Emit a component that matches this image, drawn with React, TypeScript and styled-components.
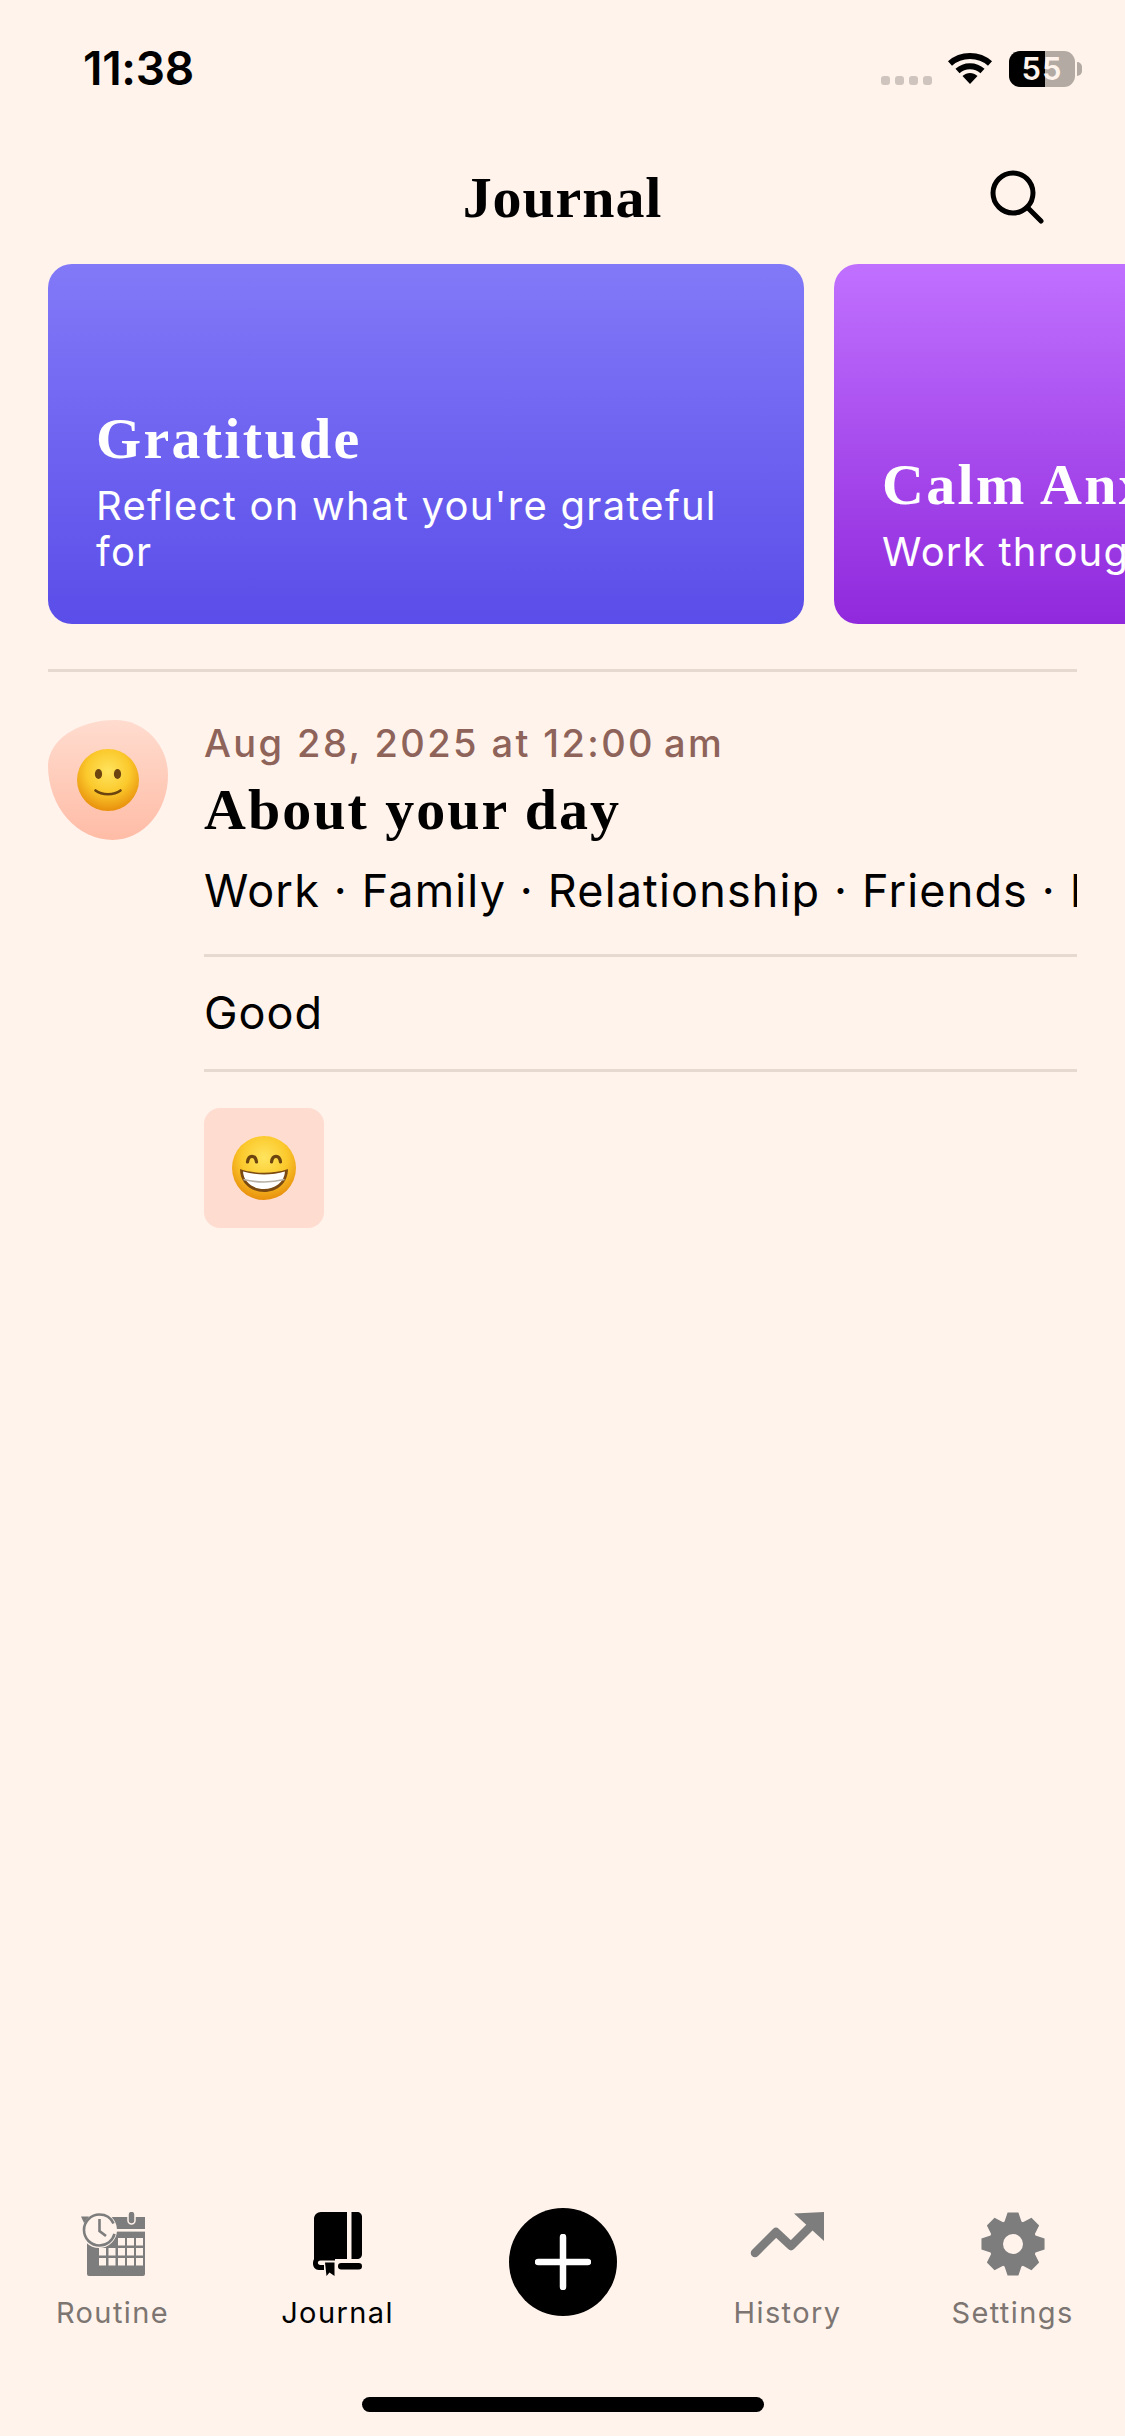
import styled, { createGlobalStyle } from "styled-components";

const GlobalStyle = createGlobalStyle`
  html, body {
    margin: 0;
    padding: 0;
    background: #fff3ec;
  }
  * {
    box-sizing: border-box;
  }
`;

const SANS = `Inter, "Liberation Sans", sans-serif`;
const SERIF = `"Liberation Serif", serif`;

const Page = styled.div`
  width: 1125px;
  height: 2436px;
  display: flex;
  flex-direction: column;
  overflow: hidden;
  background: #fff3ec;
  color: #000;
  font-family: ${SANS};
`;

const StatusBar = styled.div`
  height: 130px;
  padding: 44px 43px 0 83px;
  display: flex;
  justify-content: space-between;
  align-items: flex-start;
`;

const Time = styled.div`
  font-size: 46px;
  line-height: 48px;
  font-weight: 600;
  letter-spacing: -0.3px;
`;

const StatusIcons = styled.div`
  display: flex;
  align-items: flex-start;
  margin-top: 7px;
`;

const SignalDots = styled.div`
  display: flex;
  gap: 5px;
  margin: 25px 15px 0 0;
`;

const Dot = styled.span`
  width: 9px;
  height: 9px;
  border-radius: 3px;
  background: #cfc5be;
`;

const Battery = styled.div`
  width: 66px;
  height: 36px;
  margin-left: 16px;
  border-radius: 11px;
  background: linear-gradient(90deg, #000 0 36px, #b3aaa4 36px 100%);
  color: #fff3ec;
  font-size: 31px;
  font-weight: 600;
  line-height: 36px;
  letter-spacing: 1px;
  text-align: center;
`;

const BatteryNub = styled.div`
  width: 5px;
  height: 14px;
  margin: 11px 0 0 2px;
  border-radius: 0 7px 7px 0;
  background: #b3aaa4;
`;

const Header = styled.header`
  height: 134px;
  padding-right: 81px;
  display: grid;
  grid-template-columns: 1fr auto 1fr;
  align-items: center;
`;

const Title = styled.h1`
  grid-column: 2;
  margin: 2px 0 0 81px;
  font-family: ${SERIF};
  font-size: 58px;
  font-weight: 700;
  letter-spacing: 0.9px;
  line-height: 62px;
`;

const SearchButton = styled.div`
  grid-column: 3;
  justify-self: end;
  width: 54px;
  height: 54px;
`;

const Carousel = styled.div`
  display: flex;
  gap: 30px;
  padding-left: 48px;
  overflow: hidden;
`;

const PromptCard = styled.div<{ $from: string; $to: string }>`
  flex: 0 0 756px;
  height: 360px;
  padding: 0 40px 49px 48px;
  display: flex;
  flex-direction: column;
  justify-content: flex-end;
  border-radius: 24px;
  color: #fff;
  background: linear-gradient(180deg, ${(p) => p.$from}, ${(p) => p.$to});
`;

const PromptTitle = styled.div`
  font-family: ${SERIF};
  font-size: 58px;
  font-weight: 700;
  line-height: 60px;
  letter-spacing: 2.3px;
  white-space: nowrap;
`;

const PromptText = styled.div`
  margin-top: 14px;
  font-size: 40px;
  line-height: 46px;
  letter-spacing: 1.25px;
`;

const Divider = styled.div`
  height: 3px;
  background: #e6d9cf;
`;

const TopDivider = styled(Divider)`
  margin: 45px 48px 0;
`;

const Entry = styled.div`
  padding: 48px 48px 0;
  display: grid;
  grid-template-columns: 120px 1fr;
  column-gap: 36px;
  flex: 1;
`;

const MoodBlob = styled.div`
  width: 120px;
  height: 120px;
  display: grid;
  place-items: center;
  border-radius: 56% 44% 46% 54% / 38% 46% 54% 62%;
  background: linear-gradient(180deg, #ffdccf, #ffbca6);
`;

const EntryBody = styled.div`
  min-width: 0;
`;

const EntryDate = styled.div`
  font-size: 38px;
  line-height: 46px;
  font-weight: 500;
  letter-spacing: 2.4px;
  color: #8e635a;
  white-space: nowrap;
`;

const EntryTitle = styled.div`
  margin-top: 13px;
  font-family: ${SERIF};
  font-size: 58px;
  line-height: 62px;
  font-weight: 700;
  letter-spacing: 2px;
`;

const Tags = styled.div`
  margin-top: 23px;
  font-size: 45px;
  line-height: 54px;
  letter-spacing: 1.15px;
  white-space: nowrap;
  overflow: hidden;
`;

const TagsDivider = styled(Divider)`
  margin-top: 36px;
`;

const Note = styled.div`
  padding: 30px 0;
  font-size: 45px;
  line-height: 52px;
  letter-spacing: 1px;
`;

const EmojiTile = styled.div`
  width: 120px;
  height: 120px;
  margin-top: 36px;
  display: grid;
  place-items: center;
  border-radius: 16px;
  background: #ffdcd0;
`;

const TabBar = styled.nav`
  display: grid;
  grid-template-columns: repeat(5, 225px);
  height: 172px;
  align-items: start;
`;

const Tab = styled.div<{ $active?: boolean }>`
  display: flex;
  flex-direction: column;
  align-items: center;
  color: ${(p) => (p.$active ? "#000" : "#7c7571")};
`;

const TabIcon = styled.div`
  height: 83px;
  display: flex;
  align-items: flex-start;
`;

const TabLabel = styled.div`
  font-size: 29px;
  line-height: 36px;
  letter-spacing: 1.4px;
`;

const AddButton = styled.div`
  width: 108px;
  height: 108px;
  justify-self: center;
  margin-top: -4px;
  border-radius: 50%;
  background: #000;
  display: grid;
  place-items: center;
`;

const HomeArea = styled.div`
  height: 52px;
  padding-top: 13px;
  display: flex;
  justify-content: center;
`;

const HomeBar = styled.div`
  width: 402px;
  height: 15px;
  border-radius: 8px;
  background: #000;
`;

function WifiIcon() {
  return (
    <svg width="46" height="33" viewBox="0 0 46 33">
      <g fill="none" stroke="#000" strokeWidth="6">
        <path d="M3 12.5C14 2.5 32 2.5 43 12.5" />
        <path d="M10.5 20C17.5 13.5 28.5 13.5 35.5 20" />
      </g>
      <path d="M15.5 25C20 21 26 21 30.5 25L23 33Z" fill="#000" />
    </svg>
  );
}

function SearchIcon() {
  return (
    <svg width="54" height="54" viewBox="0 0 54 54" fill="none" stroke="#000" strokeWidth="5" strokeLinecap="round">
      <circle cx="23" cy="23" r="20" />
      <path d="M37.5 37.5L51 51" />
    </svg>
  );
}

function SmileEmoji() {
  return (
    <svg width="62" height="62" viewBox="0 0 62 62">
      <defs>
        <radialGradient id="smileFace" cx="50%" cy="36%" r="64%">
          <stop offset="0%" stopColor="#ffe45e" />
          <stop offset="55%" stopColor="#fbc92c" />
          <stop offset="100%" stopColor="#e88f0c" />
        </radialGradient>
      </defs>
      <circle cx="31" cy="31" r="31" fill="url(#smileFace)" />
      <ellipse cx="21.5" cy="25" rx="3.6" ry="5" fill="#6b4410" />
      <ellipse cx="40.5" cy="25" rx="3.6" ry="5" fill="#6b4410" />
      <path d="M18.5 41.5C25 46.5 37 46.5 43.5 41.5" fill="none" stroke="#6b4410" strokeWidth="2.6" strokeLinecap="round" />
    </svg>
  );
}

function GrinEmoji() {
  return (
    <svg width="64" height="64" viewBox="0 0 64 64">
      <defs>
        <radialGradient id="grinFace" cx="50%" cy="34%" r="66%">
          <stop offset="0%" stopColor="#ffe45e" />
          <stop offset="55%" stopColor="#fbc92c" />
          <stop offset="100%" stopColor="#e88f0c" />
        </radialGradient>
      </defs>
      <circle cx="32" cy="32" r="32" fill="url(#grinFace)" />
      <g fill="none" stroke="#6b4410" strokeWidth="3.2" strokeLinecap="round">
        <path d="M15.5 26C16.5 18.5 23.5 18.5 24.5 26" />
        <path d="M39.5 26C40.5 18.5 47.5 18.5 48.5 26" />
      </g>
      <path d="M8 33C22 38 42 38 56 33C56 47 45 56 32 56C19 56 8 47 8 33Z" fill="#7a4a12" />
      <path d="M11 35.5C24 39.5 40 39.5 53 35.5C52.5 46 43 53 32 53C21 53 11.5 46 11 35.5Z" fill="#fff" />
      <path d="M11.5 43.5C24 46.5 40 46.5 52.5 43.5" fill="none" stroke="#b9b2a8" strokeWidth="1.6" />
    </svg>
  );
}

function RoutineIcon() {
  const cells = [
    [37, 26], [46, 26], [55, 26],
    [18, 36], [27.5, 36], [37, 36], [46, 36], [55, 36],
    [18, 46], [27.5, 46], [37, 46], [46, 46], [55, 46],
  ];
  return (
    <svg width="64" height="64" viewBox="0 0 64 64">
      <path d="M8 5H64V62a2 2 0 0 1-2 2H8a2 2 0 0 1-2-2V7a2 2 0 0 1 2-2Z" fill="#7d7d7d" />
      <rect x="6" y="17" width="58" height="2.6" fill="#fff3ec" />
      <rect x="47" y="-1" width="7" height="13" rx="3.5" fill="#7d7d7d" stroke="#fff3ec" strokeWidth="1.5" />
      {cells.map(([x, y]) => (
        <rect key={`${x}-${y}`} x={x} y={y} width="7" height="7.5" fill="#fff3ec" />
      ))}
      <circle cx="18" cy="18" r="18" fill="#fff3ec" />
      <circle cx="18.5" cy="18" r="15.5" fill="none" stroke="#7d7d7d" strokeWidth="2.6" strokeDasharray="86 12" strokeDashoffset="-4" />
      <path d="M0 4.5L8 4.5L3 11Z" fill="#7d7d7d" />
      <path d="M18.5 7V19L25 24" fill="none" stroke="#7d7d7d" strokeWidth="2.6" />
    </svg>
  );
}

function BookIcon() {
  return (
    <svg width="49" height="64" viewBox="0 0 49 64">
      <path d="M8 0H34V47H6C3.5 47 2 49 1 50V7C1 3 4 0 8 0Z" fill="#000" />
      <path d="M38.5 0H44C47 0 49 2 49 5V42C49 45 47 47 44 47H38.5Z" fill="#000" />
      <path d="M6 44H22V48.5H7.5C4 48.5 4 53 7.5 53H11V58H6C2 58 0 55 0 51.5C0 47 2.5 44 6 44Z" fill="#000" />
      <path d="M12 50.5H21.5V64L16.5 60.5L13.5 64Z" fill="#000" />
      <rect x="25" y="51" width="24" height="6.5" rx="3.2" fill="#000" />
    </svg>
  );
}

function PlusIcon() {
  return (
    <svg width="56" height="56" viewBox="0 0 56 56" stroke="#fff" strokeWidth="6.5" strokeLinecap="round">
      <path d="M28 3V53M3 28H53" />
    </svg>
  );
}

function TrendIcon() {
  return (
    <svg width="75" height="46" viewBox="0 0 75 46">
      <path d="M5 41L26 20L41 34L60 15" fill="none" stroke="#7d7d7d" strokeWidth="8.5" strokeLinecap="round" strokeLinejoin="round" />
      <path d="M44 1.5L74 0V29Z" fill="#7d7d7d" />
    </svg>
  );
}

// builds the eight tooth outline so the teeth stay evenly spaced
function gearPath() {
  const c = 32;
  const pts: string[] = [];
  for (let i = 0; i < 8; i++) {
    const a = (i * Math.PI) / 4 - Math.PI / 2;
    const at = (r: number, d: number) =>
      `${(c + r * Math.cos(a + d)).toFixed(2)} ${(c + r * Math.sin(a + d)).toFixed(2)}`;
    pts.push(at(24, -0.36), at(32, -0.17), at(32, 0.17), at(24, 0.36));
  }
  return `M${pts.join("L")}Z`;
}

function GearIcon() {
  return (
    <svg width="64" height="64" viewBox="0 0 64 64">
      <path
        fillRule="evenodd"
        fill="#7d7d7d"
        d={`${gearPath()}M32 22a10 10 0 1 0 0 20a10 10 0 1 0 0-20Z`}
      />
    </svg>
  );
}

export default function App() {
  return (
    <Page>
      <GlobalStyle />
      <StatusBar>
        <Time>11:38</Time>
        <StatusIcons>
          <SignalDots>
            <Dot />
            <Dot />
            <Dot />
            <Dot />
          </SignalDots>
          <WifiIcon />
          <Battery>55</Battery>
          <BatteryNub />
        </StatusIcons>
      </StatusBar>

      <Header>
        <Title>Journal</Title>
        <SearchButton>
          <SearchIcon />
        </SearchButton>
      </Header>

      <Carousel>
        <PromptCard $from="#8279f8" $to="#5a4de9">
          <PromptTitle>Gratitude</PromptTitle>
          <PromptText>Reflect on what you're grateful for</PromptText>
        </PromptCard>
        <PromptCard $from="#c070ff" $to="#9029dc">
          <PromptTitle>Calm Anxiety</PromptTitle>
          <PromptText>Work through your worries</PromptText>
        </PromptCard>
      </Carousel>
      <TopDivider />

      <Entry>
        <MoodBlob>
          <SmileEmoji />
        </MoodBlob>
        <EntryBody>
          <EntryDate>Aug 28, 2025 at 12:00{"\u202f"}am</EntryDate>
          <EntryTitle>About your day</EntryTitle>
          <Tags>Work · Family · Relationship · Friends · Hobbies</Tags>
          <TagsDivider />
          <Note>Good</Note>
          <Divider />
          <EmojiTile>
            <GrinEmoji />
          </EmojiTile>
        </EntryBody>
      </Entry>

      <TabBar>
        <Tab>
          <TabIcon>
            <RoutineIcon />
          </TabIcon>
          <TabLabel>Routine</TabLabel>
        </Tab>
        <Tab $active>
          <TabIcon>
            <BookIcon />
          </TabIcon>
          <TabLabel>Journal</TabLabel>
        </Tab>
        <AddButton>
          <PlusIcon />
        </AddButton>
        <Tab>
          <TabIcon>
            <TrendIcon />
          </TabIcon>
          <TabLabel>History</TabLabel>
        </Tab>
        <Tab>
          <TabIcon>
            <GearIcon />
          </TabIcon>
          <TabLabel>Settings</TabLabel>
        </Tab>
      </TabBar>
      <HomeArea>
        <HomeBar />
      </HomeArea>
    </Page>
  );
}
